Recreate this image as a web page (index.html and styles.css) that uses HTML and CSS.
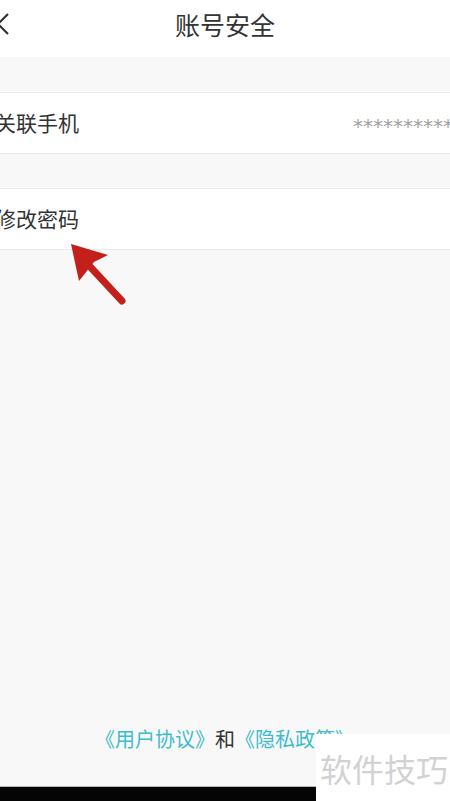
FILE: index.html
```html
<!DOCTYPE html>
<html lang="zh">
<head>
<meta charset="utf-8">
<title>账号安全</title>
<link rel="stylesheet" href="styles.css">
</head>
<body>
<div class="page">
  <header class="header">
    <div class="back">
      <svg width="12" height="24" viewBox="0 0 12 24"><polyline points="8,2 -2,12 8,22" fill="none" stroke="#333" stroke-width="2.2"/></svg>
    </div>
    <h1 class="title">账号安全</h1>
    <div class="spacer"></div>
  </header>
  <main class="main">
    <div class="gap gap-first"></div>
    <div class="row">
      <span class="label">关联手机</span>
      <span class="value">************</span>
    </div>
    <div class="gap gap-second"></div>
    <div class="row">
      <span class="label">修改密码</span>
    </div>
    <div class="fill"></div>
    <p class="agreement"><span class="link">《用户协议》</span><span class="and">和</span><span class="link">《隐私政策》</span></p>
  </main>
  <div class="navbar"></div>
  <svg class="arrow" width="80" height="80" viewBox="0 0 80 80">
    <line x1="56" y1="61" x2="16" y2="18" stroke="#c3201c" stroke-width="7" stroke-linecap="round"/>
    <polygon points="5,4 42,15 28,22 13,41" fill="#c3201c"/>
  </svg>
  <div class="watermark">软件技巧</div>
</div>
</body>
</html>
```

FILE: styles.css
```css
* { box-sizing: border-box; }
html, body { margin: 0; padding: 0; }
body {
  font-family: "Noto Sans CJK SC", "Noto Sans", sans-serif;
  background: #f8f8f8;
  color: #333;
}
.page {
  position: relative;
  width: 450px;
  height: 801px;
  display: flex;
  flex-direction: column;
  overflow: hidden;
}
.header {
  height: 57px;
  background: #fff;
  display: grid;
  grid-template-columns: 1fr auto 1fr;
  align-items: center;
}
.back {
  display: flex;
  align-items: center;
  height: 24px;
  margin-top: -10px;
}
.back svg { display: block; }
.title {
  margin: 0;
  font-size: 25px;
  font-weight: 400;
  line-height: 30px;
  color: #333;
  margin-top: -9px;
}
.main {
  flex: 1;
  display: flex;
  flex-direction: column;
}
.gap { background: #f8f8f8; }
.gap-first { height: 35px; }
.gap-second { height: 34px; }
.row {
  height: 62px;
  background: #fff;
  border-top: 1px solid #ebebeb;
  border-bottom: 1px solid #ebebeb;
  display: flex;
  align-items: center;
  justify-content: space-between;
  overflow: hidden;
}
.label {
  font-size: 21px;
  line-height: 28px;
  margin-left: -5px;
  margin-top: -2px;
  color: #333;
  white-space: nowrap;
}
.value {
  font-family: "DejaVu Sans", sans-serif;
  font-size: 20px;
  line-height: 28px;
  color: #a0a0a0;
  margin-right: -23px;
  letter-spacing: 0;
  white-space: nowrap;
  margin-top: 6px;
}
.fill { flex: 1; }
.agreement {
  margin: 0 0 34px;
  text-align: center;
  font-size: 20px;
  line-height: 26px;
  white-space: nowrap;
}
.link { color: #3fbccb; }
.and { color: #333; }
.navbar {
  height: 15px;
  background: #050505;
  border-top: 1px solid #b8b8b8;
}
.arrow {
  position: absolute;
  left: 66px;
  top: 240px;
}
.watermark {
  position: absolute;
  left: 316px;
  top: 734px;
  width: 134px;
  height: 67px;
  background: #fff;
  color: #d2d2d2;
  font-size: 32px;
  line-height: 40px;
  padding: 14px 0 0 4px;
  white-space: nowrap;
}
```
